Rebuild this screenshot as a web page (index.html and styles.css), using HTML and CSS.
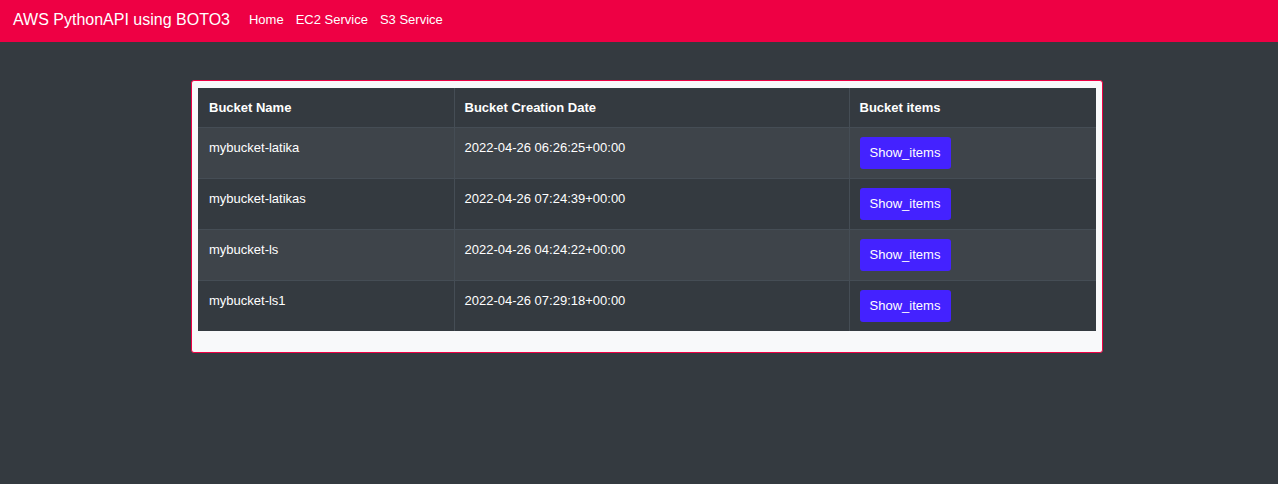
FILE: index.html
```html
<!DOCTYPE html>
<html>
<head>
<meta charset="utf-8">
<link rel="stylesheet" href="styles.css">
</head>
<body>
<nav class="navbar">
  <span class="brand">AWS PythonAPI using BOTO3</span>
  <a class="nav-link" href="#">Home</a>
  <a class="nav-link" href="#">EC2 Service</a>
  <a class="nav-link" href="#">S3 Service</a>
</nav>
<main class="content">
  <div class="card">
    <table class="table">
      <thead>
        <tr><th class="c1">Bucket Name</th><th class="c2">Bucket Creation Date</th><th class="c3">Bucket items</th></tr>
      </thead>
      <tbody>
        <tr><td>mybucket-latika</td><td>2022-04-26 06:26:25+00:00</td><td class="action"><button class="btn">Show_items</button></td></tr>
        <tr><td>mybucket-latikas</td><td>2022-04-26 07:24:39+00:00</td><td class="action"><button class="btn">Show_items</button></td></tr>
        <tr><td>mybucket-ls</td><td>2022-04-26 04:24:22+00:00</td><td class="action"><button class="btn">Show_items</button></td></tr>
        <tr><td>mybucket-ls1</td><td>2022-04-26 07:29:18+00:00</td><td class="action"><button class="btn">Show_items</button></td></tr>
      </tbody>
    </table>
  </div>
</main>
</body>
</html>
```
FILE: styles.css
```css
html, body {
  margin: 0;
  padding: 0;
}
body {
  background: #343a40;
  font-family: "Liberation Sans", Arial, sans-serif;
  font-size: 13px;
  line-height: 1.5;
  color: #fff;
  min-height: 484px;
}
.navbar {
  height: 42px;
  background: #ee0044;
  display: flex;
  align-items: center;
  padding: 0 13px 2px;
  box-sizing: border-box;
}
.brand {
  font-size: 16px;
  color: #fff;
  margin-right: 19px;
}
.nav-link {
  color: #fff;
  text-decoration: none;
  margin-right: 12px;
}
.content {
  padding: 38px 0 0 191px;
}
.card {
  width: 912px;
  box-sizing: border-box;
  background: #f8f9fa;
  border: 1px solid #ee0044;
  border-radius: 3px;
  padding: 7px 6px 6px;
}
.table {
  width: 898px;
  border-collapse: collapse;
  margin-bottom: 15px;
  background: #343a40;
  color: #fff;
}
.table th, .table td {
  text-align: left;
  vertical-align: top;
  padding: 10px 10px 9px 10px;
  border: 1px solid #454d55;
}
.table td.action {
  padding-top: 9px;
}
.table tr > :first-child { border-left: none; padding-left: 11px; }
.table tr > :last-child { border-right: none; }
.table thead th {
  border-top: none;
  font-weight: bold;
}
.table tbody tr:last-child td { border-bottom: none; }
.table tbody tr:nth-child(odd) {
  background: #3e444a;
}
.c1 { width: 256px; box-sizing: border-box; }
.c2 { width: 395px; box-sizing: border-box; }
.c3 { width: 247px; box-sizing: border-box; }
.btn {
  font-family: inherit;
  font-size: 13px;
  color: #fff;
  background: #4422ff;
  border: none;
  border-radius: 3px;
  height: 32px;
  width: 91px;
  padding: 0;
  display: block;
  cursor: pointer;
}
```
